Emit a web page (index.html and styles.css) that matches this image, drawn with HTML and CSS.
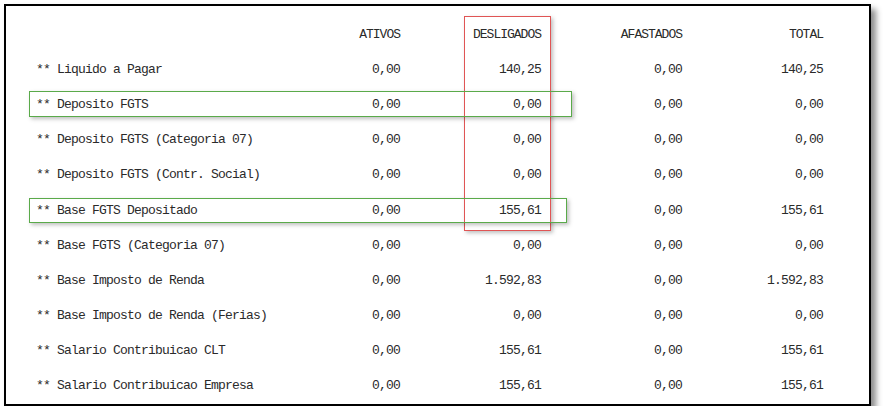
FILE: index.html
```html
<!DOCTYPE html>
<html>
<head>
<meta charset="utf-8">
<link rel="stylesheet" href="styles.css">
</head>
<body>
<div class="frame">
  <div class="report">
    <div class="row head">
      <span class="label"></span><span class="num">ATIVOS</span><span class="num">DESLIGADOS</span><span class="num">AFASTADOS</span><span class="num">TOTAL</span>
    </div>
    <div class="row"><span class="label">** Liquido a Pagar</span><span class="num">0,00</span><span class="num">140,25</span><span class="num">0,00</span><span class="num">140,25</span></div>
    <div class="row"><span class="label">** Deposito FGTS</span><span class="num">0,00</span><span class="num">0,00</span><span class="num">0,00</span><span class="num">0,00</span></div>
    <div class="row"><span class="label">** Deposito FGTS (Categoria 07)</span><span class="num">0,00</span><span class="num">0,00</span><span class="num">0,00</span><span class="num">0,00</span></div>
    <div class="row"><span class="label">** Deposito FGTS (Contr. Social)</span><span class="num">0,00</span><span class="num">0,00</span><span class="num">0,00</span><span class="num">0,00</span></div>
    <div class="row"><span class="label">** Base FGTS Depositado</span><span class="num">0,00</span><span class="num">155,61</span><span class="num">0,00</span><span class="num">155,61</span></div>
    <div class="row"><span class="label">** Base FGTS (Categoria 07)</span><span class="num">0,00</span><span class="num">0,00</span><span class="num">0,00</span><span class="num">0,00</span></div>
    <div class="row"><span class="label">** Base Imposto de Renda</span><span class="num">0,00</span><span class="num">1.592,83</span><span class="num">0,00</span><span class="num">1.592,83</span></div>
    <div class="row"><span class="label">** Base Imposto de Renda (Ferias)</span><span class="num">0,00</span><span class="num">0,00</span><span class="num">0,00</span><span class="num">0,00</span></div>
    <div class="row"><span class="label">** Salario Contribuicao CLT</span><span class="num">0,00</span><span class="num">155,61</span><span class="num">0,00</span><span class="num">155,61</span></div>
    <div class="row"><span class="label">** Salario Contribuicao Empresa</span><span class="num">0,00</span><span class="num">155,61</span><span class="num">0,00</span><span class="num">155,61</span></div>
  </div>
  <div class="mark red"></div>
  <div class="mark green g1"></div>
  <div class="mark green g2"></div>
</div>
</body>
</html>
```

FILE: styles.css
```css
html, body {
  margin: 0;
  padding: 0;
  background: #fff;
}

.frame {
  position: relative;
  margin: 4px 0 0 4px;
  width: 863px;
  height: 398px;
  border: 2px solid #000;
  background: #fff;
  box-shadow: 5px 5px 6px rgba(0, 0, 0, 0.45);
}

.report {
  padding: 11px 0 0 30px;
  font-family: "Liberation Mono", "Courier New", monospace;
  font-size: 13px;
  letter-spacing: -0.8px;
  color: #2a2a2a;
}

.row {
  display: grid;
  grid-template-columns: 223px 141px 141px 141px 141px;
  height: 35.1px;
  align-items: center;
  white-space: pre;
}

.num {
  text-align: right;
}

.head .num {
  letter-spacing: -1px;
}

.mark {
  position: absolute;
  box-sizing: border-box;
}

.red {
  left: 458px;
  top: 10px;
  width: 87px;
  height: 215px;
  border: 1.5px solid #e05555;
  box-shadow: 2px 2px 4px rgba(0, 0, 0, 0.25);
}

.green {
  border: 1.5px solid #5aaa4a;
  box-shadow: 2px 2px 4px rgba(0, 0, 0, 0.25);
}

.g1 {
  left: 23px;
  top: 85px;
  width: 543px;
  height: 26px;
}

.g2 {
  left: 23px;
  top: 192px;
  width: 538px;
  height: 25px;
}
```
